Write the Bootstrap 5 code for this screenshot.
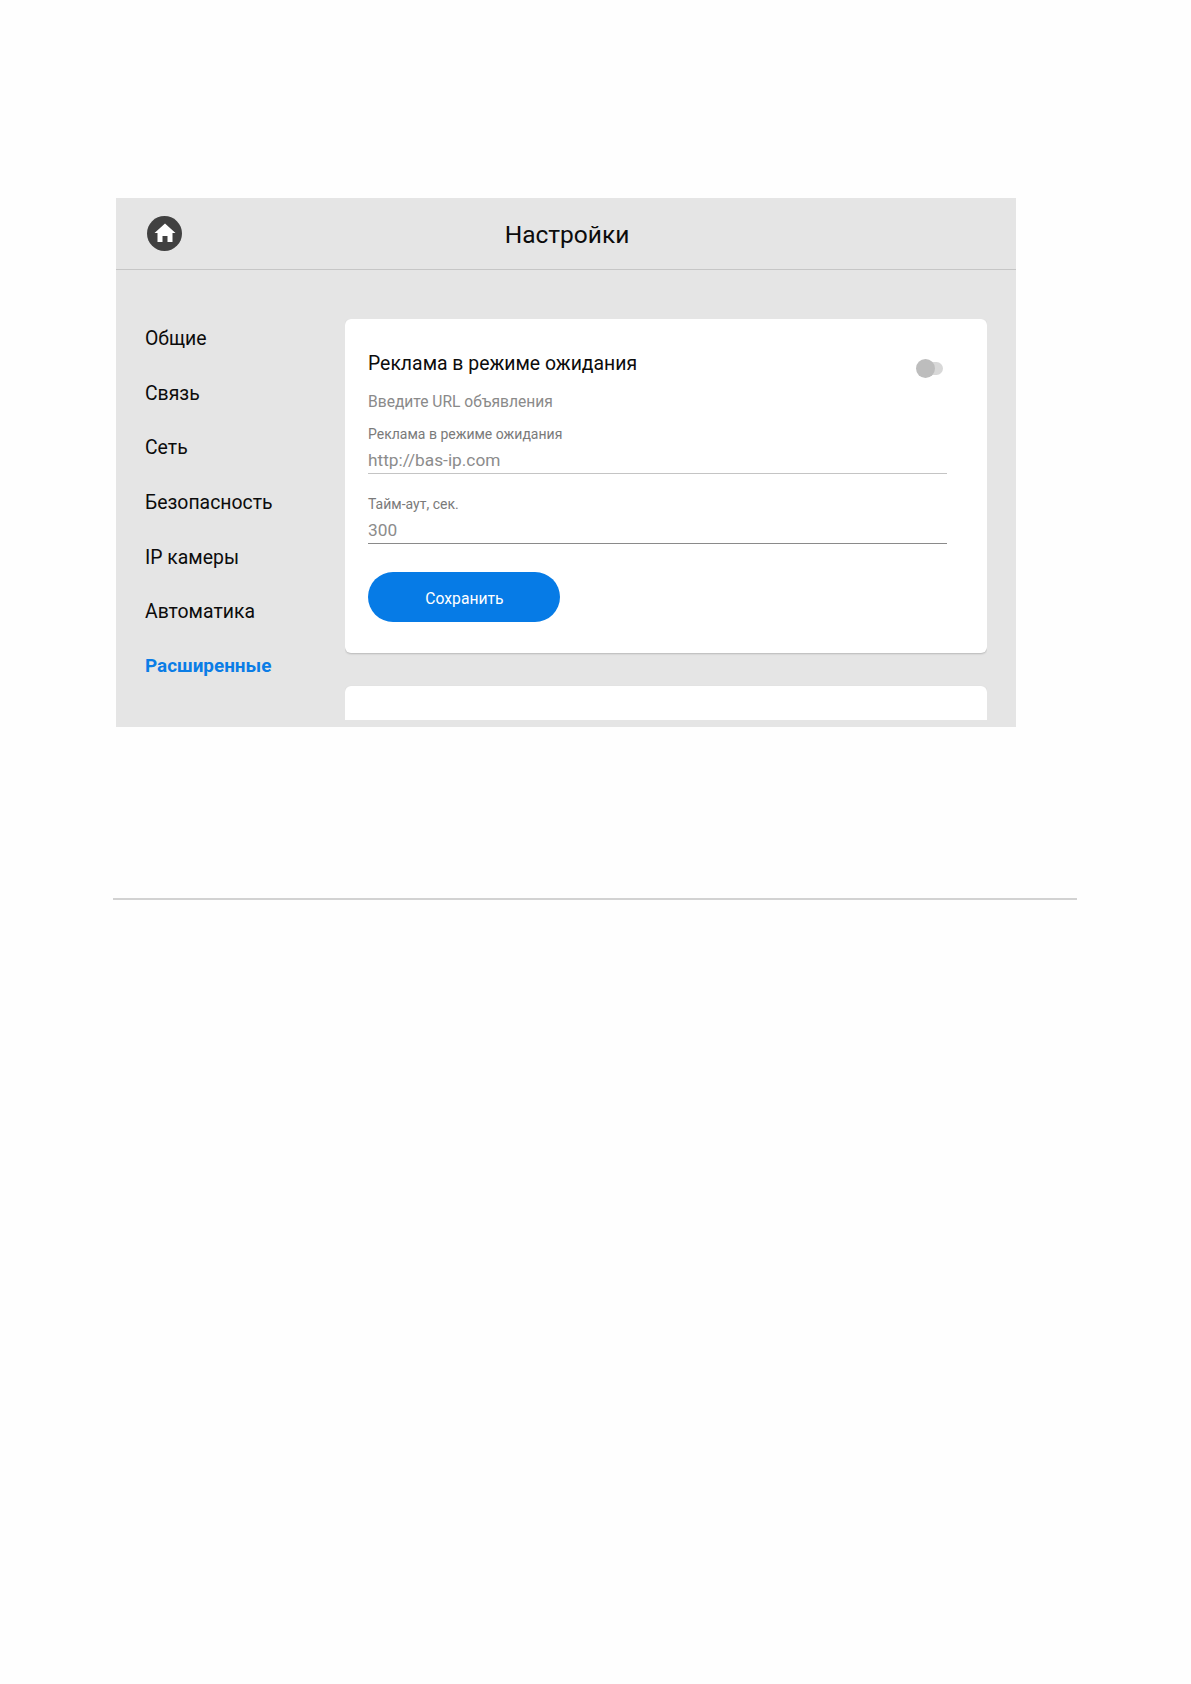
<!DOCTYPE html>
<html lang="ru">
<head>
<meta charset="utf-8">
<title>Настройки</title>
<link href="https://cdn.jsdelivr.net/npm/bootstrap@5.3.0/dist/css/bootstrap.min.css" rel="stylesheet">
<style>
body { background: #fefefe; font-family: Roboto, "Noto Sans", sans-serif; margin: 0; }
.sheet { padding: 198px 0 0 113px; }
.device { width: 900px; height: 529px; margin-left: 3px; background: #e5e5e5; overflow: hidden; display: flex; flex-direction: column; }
.device-head { height: 72px; flex: none; border-bottom: 1px solid #c6c6c6; padding-left: 31px; }
.device-title { flex: 1; font-size: 24.5px; color: #0c0c0c; line-height: 1; text-align: center; padding-right: 64px; padding-top: 4px; }
.home-ico { width: 35px; height: 35px; flex: none; display: block; }
.device-body { flex: 1; min-height: 0; padding: 49px 29px 0 29px; overflow: hidden; }
.side-menu { width: 200px; flex: none; list-style: none; margin: 0; }
.side-menu li { font-size: 19.4px; height: 54.7px; line-height: 40px; color: #0c0c0c; }
.side-menu li.on { color: #0b7de6; font-weight: 700; font-size: 18.9px; line-height: 38.5px; }
.pane { flex: 1; min-width: 0; height: 401px; overflow: hidden; }
.panel-box { background: #fff; border-radius: 6px; box-shadow: 0 1px 2px rgba(0,0,0,.2); }
.panel-main { height: 334px; padding: 33px 40px 0 23px; position: relative; }
.panel-next { height: 60px; margin-top: 33px; }
.panel-title { font-size: 19.4px; color: #0c0c0c; line-height: 24px; }
.panel-hint { font-size: 15.6px; color: #8a8a8a; line-height: 20px; margin-top: 16px; }
.fld-label { font-size: 14px; color: #7a7a7a; line-height: 20px; margin-top: 12px; }
.fld-label.gap-big { margin-top: 20px; }
.fld-value { font-size: 17.3px; color: #8c8c8c; line-height: 24px; margin-top: 4px; padding-bottom: 1px; border-bottom: 1px solid #c4c4c4; }
.fld-value.dark { border-bottom-color: #8a8a8a; }
.save-btn { width: 192px; height: 50px; border-radius: 25px; background: #067be6; color: #fff; font-size: 15.7px; border: 0; margin-top: 28px; padding: 3px 0 0 1px; }
.save-btn:hover { background: #067be6; color: #fff; }
.sw { position: absolute; right: 44px; top: 40px; width: 27px; height: 19px; }
.sw-track { position: absolute; left: 4px; right: 0; top: 3px; height: 13px; background: #d8d8d8; border-radius: 7px; }
.sw-thumb { position: absolute; left: 0; top: 0; width: 19px; height: 19px; background: #bdbdbd; border-radius: 50%; }
.rule-line { margin-top: 171px; width: 964px; height: 0; border-top: 2px solid #d2d2d2; }
</style>
</head>
<body>
<div class="sheet">
  <div class="device">
    <div class="device-head d-flex align-items-center">
      <svg class="home-ico" viewBox="0 0 35 35" aria-hidden="true"><circle cx="17.5" cy="17.5" r="17.5" fill="#414141"/><path d="M18 7.5 7.5 17h3v9h5v-6h5v6h5v-9h3z" fill="#fff"/></svg>
      <div class="device-title">Настройки</div>
    </div>
    <div class="device-body d-flex">
      <ul class="side-menu p-0">
        <li>Общие</li>
        <li>Связь</li>
        <li>Сеть</li>
        <li>Безопасность</li>
        <li>IP камеры</li>
        <li>Автоматика</li>
        <li class="on">Расширенные</li>
      </ul>
      <div class="pane">
        <div class="panel-box panel-main">
          <div class="panel-title">Реклама в режиме ожидания</div>
          <div class="sw"><span class="sw-track"></span><span class="sw-thumb"></span></div>
          <div class="panel-hint">Введите URL объявления</div>
          <div class="fld-label">Реклама в режиме ожидания</div>
          <div class="fld-value">http://bas-ip.com</div>
          <div class="fld-label gap-big">Тайм-аут, сек.</div>
          <div class="fld-value dark">300</div>
          <button type="button" class="btn save-btn">Сохранить</button>
        </div>
        <div class="panel-box panel-next"></div>
      </div>
    </div>
  </div>
  <div class="rule-line"></div>
</div>
<script src="https://cdn.jsdelivr.net/npm/bootstrap@5.3.0/dist/js/bootstrap.bundle.min.js"></script>
</body>
</html>
